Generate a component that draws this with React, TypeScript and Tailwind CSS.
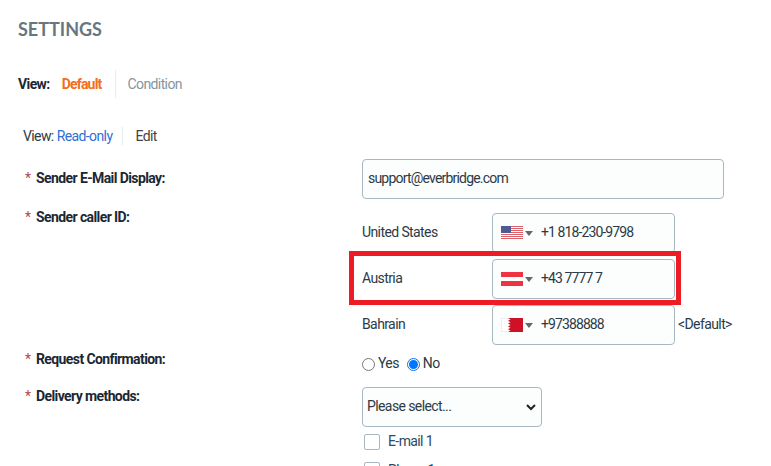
import { ReactNode } from "react";

function UsFlag() {
  return (
    <svg width="22" height="14" viewBox="0 0 22 14" className="shrink-0">
      <rect width="22" height="14" fill="#fff" />
      {[0, 2, 4, 6, 8, 10, 12].map((y) => (
        <rect key={y} y={y} width="22" height="1" fill="#d9616a" />
      ))}
      <rect width="10" height="7" fill="#4f5a8e" />
    </svg>
  );
}

function AtFlag() {
  return (
    <svg width="22" height="14" viewBox="0 0 22 14" className="shrink-0">
      <rect width="22" height="14" fill="#fff" />
      <rect width="22" height="5" fill="#ef3340" />
      <rect y="9" width="22" height="5" fill="#ef3340" />
    </svg>
  );
}

function BhFlag() {
  return (
    <svg width="22" height="14" viewBox="0 0 22 14" className="shrink-0">
      <rect x="0.5" y="0.5" width="21" height="13" fill="#fff" stroke="#eceef0" />
      <path d="M22 0H7L9.5 1.4 7 2.8 9.5 4.2 7 5.6 9.5 7 7 8.4 9.5 9.8 7 11.2 9.5 12.6 7 14H22Z" fill="#ce1126" />
    </svg>
  );
}

function Label({ children }: { children: ReactNode }) {
  return (
    <div className="flex pl-[25px] font-bold leading-[16px] text-[#1b2733]">
      <span className="w-[11px] font-normal text-[#b5493f]">*</span>
      <span>{children}</span>
    </div>
  );
}

function PhoneRow({ country, flag, number, note }: { country: string; flag: ReactNode; number: string; note?: string }) {
  return (
    <div className="flex h-[46px] items-center">
      <div className="w-[130px] pb-[2px]">{country}</div>
      <div className="flex h-[40px] w-[183px] items-center rounded-[4px] border border-[#a9b8c0] bg-[#fcfdfd] pl-[8px]">
        {flag}
        <span className="ml-[2px] h-0 w-0 border-x-[4px] border-t-[5px] border-x-transparent border-t-[#666]" />
        <span className="ml-[8px] pb-[2px] tracking-[-0.9px]">{number}</span>
      </div>
      {note && <div className="ml-[3px] pb-[2px]">{note}</div>}
    </div>
  );
}

export default function App() {
  return (
    <div className="relative h-[466px] w-[771px] overflow-hidden bg-white font-['Roboto',sans-serif] text-[14px] tracking-[-0.6px] text-[#2b3a46]">
      <h1 className="pl-[18px] pt-[18px] font-['Lato',sans-serif] text-[18px] font-bold leading-[22px] tracking-normal text-[#67767f]">SETTINGS</h1>

      {/* top view switch */}
      <div className="ml-[18px] mt-[30px] flex h-[28px] items-center">
        <span className="font-bold text-[#1b2733]">View:</span>
        <span className="ml-[12px] font-bold tracking-[-0.8px] text-[#f26f21]">Default</span>
        <span className="ml-[13px] h-[28px] w-px bg-[#e8ecee]" />
        <span className="ml-[12px] text-[#84959f]">Condition</span>
      </div>

      {/* form view switch */}
      <div className="ml-[23px] mt-[29px] flex h-[18px] items-center">
        <span>View:</span>
        <span className="ml-[3px] text-[#2f6fd6]">Read-only</span>
        <span className="ml-[10px] h-[18px] w-px bg-[#e8ecee]" />
        <span className="ml-[12px] text-[#444]">Edit</span>
      </div>

      <div className="mt-[14px] grid grid-cols-[362px_1fr]">
        <div className="pt-[11px]">
          <Label>Sender E-Mail Display:</Label>
        </div>
        <div className="flex h-[40px] w-[362px] items-center rounded-[4px] border border-[#a9b8c0] bg-[#fcfdfd] pb-[2px] pl-[5px] tracking-[-0.8px]">support@everbridge.com</div>

        <div className="mt-[3px] pt-[7px]">
          <Label>Sender caller ID:</Label>
        </div>
        <div className="mt-[11px]">
          <PhoneRow country="United States" flag={<UsFlag />} number="+1 818-230-9798" />
          <PhoneRow country="Austria" flag={<AtFlag />} number="+43 7777 7" />
          <PhoneRow country="Bahrain" flag={<BhFlag />} number="+97388888" note="<Default>" />
        </div>

        <div className="mt-[3px]">
          <Label>Request Confirmation:</Label>
        </div>
        <div className="mt-[7px] flex h-[18px] items-center">
          <span className="h-[13px] w-[13px] rounded-full border border-[#767676] bg-white" />
          <span className="ml-[3px] pb-[2px]">Yes</span>
          <span className="ml-[8px] flex h-[13px] w-[13px] items-center justify-center rounded-full border border-[#0075ff] bg-white">
            <span className="h-[9px] w-[9px] rounded-full bg-[#0075ff]" />
          </span>
          <span className="ml-[3px] pb-[2px]">No</span>
        </div>

        <div className="mt-[15px]">
          <Label>Delivery methods:</Label>
        </div>
        <div className="mt-[14px]">
          <div className="flex h-[40px] w-[180px] items-center justify-between rounded-[4px] border border-[#a9b8c0] bg-[#fcfdfd] pl-[4px] pr-[5px]">
            <span className="pb-[2px]">Please select...</span>
            <svg width="10" height="7" viewBox="0 0 10 7" fill="none" stroke="#222" strokeWidth="2">
              <path d="M1 1l4 4 4-4" />
            </svg>
          </div>
          <div className="mt-[7px] flex h-[16px] items-center">
            <span className="ml-[2px] h-[16px] w-[16px] rounded-[2px] border border-[#a9b8c0] bg-white" />
            <span className="ml-[8px] pb-[2px] text-[#2b4a5e]">E-mail 1</span>
          </div>
          <div className="mt-[12px] flex h-[16px] items-center">
            <span className="ml-[2px] h-[16px] w-[16px] rounded-[2px] border border-[#a9b8c0] bg-white" />
            <span className="ml-[8px] text-[#2b4a5e]">Phone 1</span>
          </div>
        </div>
      </div>

      {/* red annotation */}
      <div className="absolute left-[349px] top-[251px] h-[54px] w-[332px] border-[5px] border-[#ed1c24]" />
    </div>
  );
}
